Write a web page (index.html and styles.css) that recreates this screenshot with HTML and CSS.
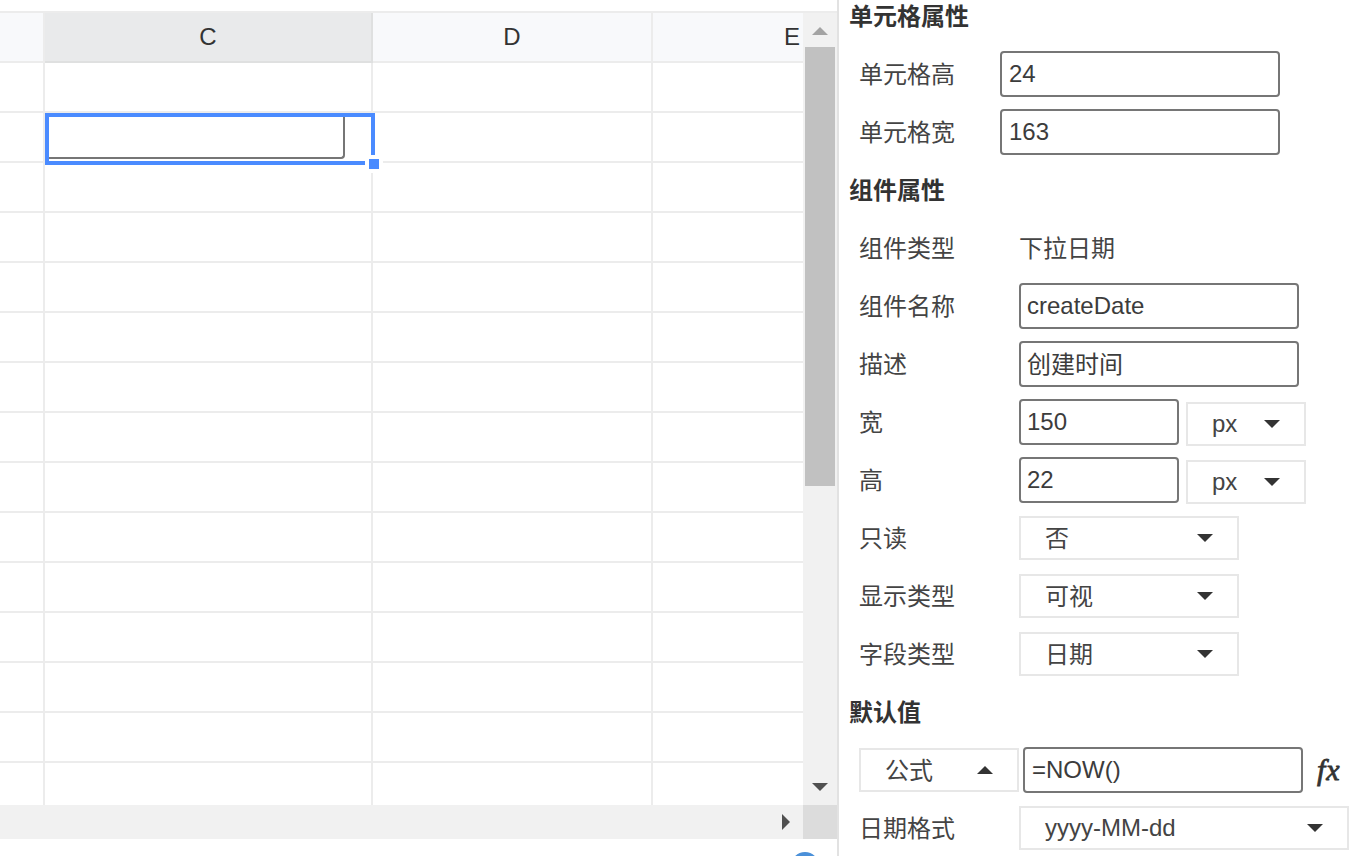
FILE: index.html
```html
<!DOCTYPE html>
<html lang="zh-CN">
<head>
<meta charset="utf-8">
<title>单元格属性</title>
<link rel="stylesheet" href="styles.css">
</head>
<body>
<div class="app">
  <section class="sheet">
    <div class="sheet-frame">
      <div class="sheet-main">
        <div class="grid">
          <div class="row head"><div class="cell a"></div><div class="cell c active">C</div><div class="cell d">D</div><div class="cell e">E</div></div>
          <div class="row"><div class="cell a"></div><div class="cell c"></div><div class="cell d"></div><div class="cell e"></div></div>
          <div class="row"><div class="cell a"></div><div class="cell c"></div><div class="cell d"></div><div class="cell e"></div></div>
          <div class="row"><div class="cell a"></div><div class="cell c"></div><div class="cell d"></div><div class="cell e"></div></div>
          <div class="row"><div class="cell a"></div><div class="cell c"></div><div class="cell d"></div><div class="cell e"></div></div>
          <div class="row"><div class="cell a"></div><div class="cell c"></div><div class="cell d"></div><div class="cell e"></div></div>
          <div class="row"><div class="cell a"></div><div class="cell c"></div><div class="cell d"></div><div class="cell e"></div></div>
          <div class="row"><div class="cell a"></div><div class="cell c"></div><div class="cell d"></div><div class="cell e"></div></div>
          <div class="row"><div class="cell a"></div><div class="cell c"></div><div class="cell d"></div><div class="cell e"></div></div>
          <div class="row"><div class="cell a"></div><div class="cell c"></div><div class="cell d"></div><div class="cell e"></div></div>
          <div class="row"><div class="cell a"></div><div class="cell c"></div><div class="cell d"></div><div class="cell e"></div></div>
          <div class="row"><div class="cell a"></div><div class="cell c"></div><div class="cell d"></div><div class="cell e"></div></div>
          <div class="row"><div class="cell a"></div><div class="cell c"></div><div class="cell d"></div><div class="cell e"></div></div>
          <div class="row"><div class="cell a"></div><div class="cell c"></div><div class="cell d"></div><div class="cell e"></div></div>
          <div class="row"><div class="cell a"></div><div class="cell c"></div><div class="cell d"></div><div class="cell e"></div></div>
          <div class="row"><div class="cell a"></div><div class="cell c"></div><div class="cell d"></div><div class="cell e"></div></div>
          <div class="selection">
            <input class="cell-input" type="text">
            <span class="sel-handle"></span>
          </div>
        </div>
        <div class="vscroll">
          <div class="v-up"><span class="tri tri-up"></span></div>
          <div class="v-thumb"></div>
          <div class="v-track"></div>
          <div class="v-down"><span class="tri tri-down"></span></div>
        </div>
      </div>
      <div class="hscroll">
        <div class="h-track"><span class="tri tri-right"></span></div>
        <div class="h-corner"></div>
      </div>
    </div>
    <span class="help-dot"></span>
  </section>
  <aside class="panel">
    <div class="panel-inner">
      <div class="title">单元格属性</div>
      <div class="field narrow"><label class="label zh">单元格高</label><input class="input wide" type="text" value="24"></div>
      <div class="field narrow"><label class="label zh">单元格宽</label><input class="input wide" type="text" value="163"></div>
      <div class="title">组件属性</div>
      <div class="field"><label class="label zh">组件类型</label><span class="value zh">下拉日期</span></div>
      <div class="field"><label class="label zh">组件名称</label><input class="input wide tight" type="text" value="createDate"></div>
      <div class="field"><label class="label zh">描述</label><input class="input wide tight zh-input" type="text" value="创建时间"></div>
      <div class="field"><label class="label zh">宽</label><input class="input short tight" type="text" value="150"><div class="select unit"><span>px</span><i class="caret"></i></div></div>
      <div class="field"><label class="label zh">高</label><input class="input short tight" type="text" value="22"><div class="select unit"><span>px</span><i class="caret"></i></div></div>
      <div class="field"><label class="label zh">只读</label><div class="select w220"><span class="zh">否</span><i class="caret"></i></div></div>
      <div class="field"><label class="label zh">显示类型</label><div class="select w220"><span class="zh">可视</span><i class="caret"></i></div></div>
      <div class="field"><label class="label zh">字段类型</label><div class="select w220"><span class="zh">日期</span><i class="caret"></i></div></div>
      <div class="title">默认值</div>
      <div class="field formula">
        <div class="select w160"><span class="zh">公式</span><i class="caret up"></i></div>
        <input class="input wide" type="text" value="=NOW()">
        <span class="fx">fx</span>
      </div>
      <div class="field"><label class="label zh">日期格式</label><div class="select w330"><span>yyyy-MM-dd</span><i class="caret"></i></div></div>
    </div>
  </aside>
</div>
</body>
</html>
```
FILE: styles.css
```css
* { box-sizing: border-box; }
html, body { margin: 0; height: 100%; background: #fff; overflow: hidden; }
body { font-family: "Liberation Sans", "Noto Sans CJK SC", sans-serif; font-size: 24px; color: #444; }

.app { display: flex; width: 1355px; height: 856px; overflow: hidden; }

/* spreadsheet */
.sheet { position: relative; width: 837px; height: 856px; padding-top: 11px; overflow: hidden; flex: none; }
.sheet-frame { display: flex; flex-direction: column; border-top: 2px solid #ececec; }
.sheet-main { display: flex; height: 792px; }
.grid { position: relative; width: 803px; overflow: hidden; flex: none; }
.row { display: flex; height: 50px; }
.cell { flex: none; height: 50px; border-right: 2px solid #ececec; border-bottom: 2px solid #ececec; }
.a { width: 45px; }
.c { width: 328px; }
.d { width: 280px; }
.e { width: 280px; }
.head .cell { background: #f8f9fb; display: flex; align-items: center; justify-content: center; color: #333; }
.head .active { background: #e9eaeb; border-right-color: #dfe0e0; border-bottom-color: #dfe0e0; }

.selection { position: absolute; left: 45px; top: 100px; width: 330px; height: 52px; border: 4px solid #4a8bff; background: #fff; }
.cell-input { display: block; width: 296px; height: 42px; margin: 0; padding: 0; border: 2px solid #767676; border-top: 0; border-left: 0; border-radius: 0 0 4px 0; background: #fff; outline: 0; }
.sel-handle { position: absolute; left: 316px; top: 38px; width: 18px; height: 18px; background: #4a8bff; border: 4px solid #fff; }

/* scrollbars */
.vscroll { width: 34px; flex: none; display: flex; flex-direction: column; align-items: center; background: #f1f1f1; }
.v-up { height: 34px; width: 100%; display: flex; justify-content: center; padding-top: 14px; flex: none; }
.v-thumb { width: 30px; height: 439px; background: #c1c1c1; flex: none; }
.v-track { flex: 1; }
.v-down { height: 34px; width: 100%; display: flex; justify-content: center; flex: none; align-items: flex-start; }
.tri { display: block; width: 0; height: 0; border-style: solid; }
.tri-up { border-width: 0 8px 8px; border-color: transparent transparent #a3a3a3; }
.tri-down { border-width: 8px 8px 0; border-color: #505050 transparent transparent; margin-top: 12px; }
.tri-right { border-width: 8px 0 8px 8px; border-color: transparent transparent transparent #505050; }
.hscroll { display: flex; height: 34px; }
.h-track { width: 803px; background: #f1f1f1; display: flex; align-items: center; justify-content: flex-end; padding-right: 13px; }
.h-corner { width: 34px; background: #dcdcdc; }
.help-dot { position: absolute; left: 791px; top: 852px; width: 28px; height: 28px; border-radius: 50%; background: #4a90d9; }

/* property panel */
.panel { flex: 1; height: 856px; border-left: 2px solid #e2e2e2; overflow: hidden; }
.panel-inner { margin-top: -13px; padding-left: 10px; }
.title { height: 58px; line-height: 60px; font-weight: bold; color: #333; }
.field { display: flex; align-items: center; height: 58px; padding-left: 10px; line-height: 30px; }
.zh { padding-top: 2px; }
.label { width: 160px; flex: none; color: #444; }
.narrow .label { width: 141px; }
.value { color: #444; }
.input { height: 46px; margin: 0; padding: 0 8px 0 7px; border: 2px solid #767676; border-radius: 4px; background: #fff; font: inherit; line-height: 30px; color: #3c3c3c; outline: 0; flex: none; }
.input.tight { padding-left: 6px; }
.input.zh-input { padding-bottom: 3px; }
.wide { width: 280px; }
.short { width: 160px; }
.select { display: flex; align-items: center; justify-content: space-between; height: 44px; padding: 0 24px; border: 2px solid #e7e7e7; background: #fff; flex: none; color: #444; }
.select > span { display: block; }
.unit { width: 120px; margin: 4px 0 0 7px; }
.w220 { width: 220px; }
.w160 { width: 160px; }
.w330 { width: 330px; }
.caret { display: block; width: 0; height: 0; border-style: solid; border-width: 8px 8px 0; border-color: #333 transparent transparent; }
.caret.up { border-width: 0 8px 8px; border-color: transparent transparent #333; }
.formula .input { margin-left: 4px; }
.fx { margin-left: 14px; font-family: "Liberation Serif", serif; font-style: italic; font-size: 30px; letter-spacing: 1px; color: #333; line-height: 1; -webkit-text-stroke: 0.8px #333; }
```
